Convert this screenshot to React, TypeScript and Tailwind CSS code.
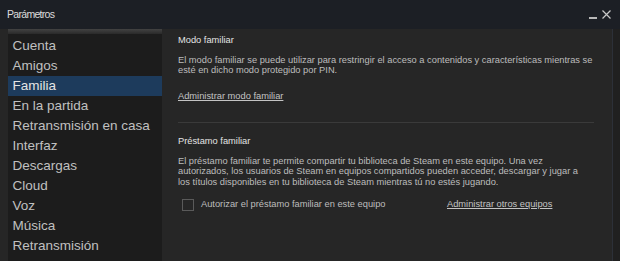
import React from "react";

const items = [
  "Cuenta",
  "Amigos",
  "Familia",
  "En la partida",
  "Retransmisión en casa",
  "Interfaz",
  "Descargas",
  "Cloud",
  "Voz",
  "Música",
  "Retransmisión",
];

export default function App() {
  return (
    <div
      className="w-[620px] h-[261px] bg-[#262626] flex flex-col overflow-hidden"
      style={{ fontFamily: '"Liberation Sans", Arial, sans-serif' }}
    >
      {/* Title bar */}
      <div className="h-[29px] shrink-0 bg-[#1c1f25] flex items-center justify-between pl-[7px] pr-[9px]">
        <span className="text-[10.5px] tracking-[-0.7px] text-[#dcdcdc] mt-[1px]">Parámetros</span>
        <div className="flex items-center gap-[5px] text-[#c8c8c8]">
          <div className="w-[8px] h-[1.5px] bg-[#b8b8b8] mt-[7px]" />
          <svg width="9" height="9" viewBox="0 0 9 9">
            <path d="M0.5 0.5 L8.5 8.5 M8.5 0.5 L0.5 8.5" stroke="#c8c8c8" strokeWidth="1.2" />
          </svg>
        </div>
      </div>

      {/* Body */}
      <div className="flex flex-1 min-h-0">
        {/* Sidebar */}
        <div className="ml-[8px] w-[154px] shrink-0 bg-[#1c1c1c] flex flex-col">
          <div className="h-[5px] bg-gradient-to-b from-[#424242] to-[#2a2a2a]" />
          <div className="pt-[1.5px]">
            {items.map((it) => (
              <div
                key={it}
                className={
                  it === "Familia"
                    ? "h-[20px] leading-[20px] pl-[4.5px] text-[13.5px] text-[#e4e4e4] bg-[#1d3b5c] whitespace-nowrap"
                    : "h-[20px] leading-[20px] pl-[4.5px] text-[13.5px] text-[#c0c0c0] whitespace-nowrap"
                }
              >
                {it}
              </div>
            ))}
          </div>
        </div>

        {/* Content */}
        <div className="ml-[16px] w-[416px] pt-[5.5px] text-[9.3px] text-[#bdbdbd]">
          <div className="leading-[11px] text-[#e4e4e4]">Modo familiar</div>
          <p className="mt-[9px] leading-[10.7px]">
            El modo familiar se puede utilizar para restringir el acceso a contenidos y características mientras se esté en dicho modo protegido por PIN.
          </p>
          <div className="mt-[15px] leading-[11px]">
            <span className="underline text-[#c4c4c4]">Administrar modo familiar</span>
          </div>
          <div className="mt-[20px] h-px bg-[#3a3a3a]" />
          <div className="mt-[13px] leading-[11px] text-[#e4e4e4]">Préstamo familiar</div>
          <p className="mt-[9px] leading-[10.3px] pr-[12px]">
            El préstamo familiar te permite compartir tu biblioteca de Steam en este equipo. Una vez autorizados, los usuarios de Steam en equipos compartidos pueden acceder, descargar y jugar a los títulos disponibles en tu biblioteca de Steam mientras tú no estés jugando.
          </p>
          <div className="mt-[12px] flex items-center h-[12px]">
            <div className="ml-[3.5px] w-[12px] h-[12px] border border-[#5a5a5a] shrink-0" />
            <span className="ml-[7.5px] w-[246px] shrink-0 whitespace-nowrap">
              Autorizar el préstamo familiar en este equipo
            </span>
            <span className="underline text-[#c4c4c4] whitespace-nowrap">Administrar otros equipos</span>
          </div>
        </div>

        <div className="flex-1" />
        <div className="w-[8px] shrink-0 bg-[#202020] border-l border-[#2c3038]" />
      </div>
    </div>
  );
}
